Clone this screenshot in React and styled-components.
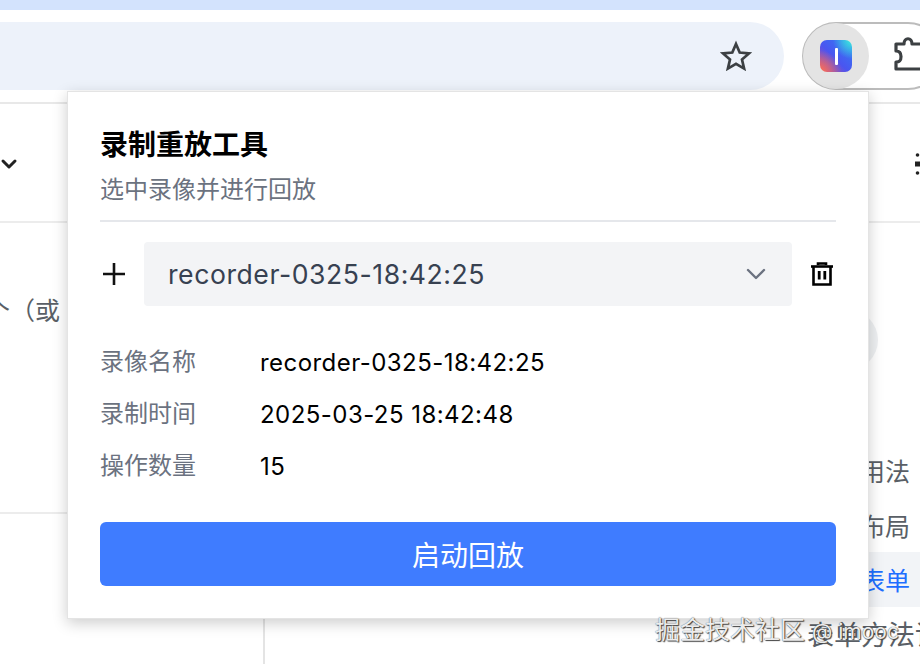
import React from "react";
import styled, { createGlobalStyle } from "styled-components";
import { ChevronDown } from "lucide-react";

const Global = createGlobalStyle`
  html, body { margin: 0; padding: 0; background: #fff; }
  body { font-family: Inter, "Noto Sans CJK SC", sans-serif; overflow: hidden; }
  * { box-sizing: border-box; }
`;
const Frame = styled.div`
  position: relative; width: 920px; height: 664px; overflow: hidden; background: #fff;
  display: flex; flex-direction: column;
`;
const TabStrip = styled.div`height: 10px; background: #d3e3fd; flex: none;`;
const Toolbar = styled.div`
  height: 94px; flex: none; display: flex; align-items: flex-start; padding-top: 12px;
  border-bottom: 2px solid #e8e8e8; background: #fff;
`;
const AddressBar = styled.div`
  width: 784px; height: 68px; background: #edf2fa; border-radius: 0 34px 34px 0;
  display: flex; align-items: center; justify-content: flex-end; padding-right: 32px; color: #3c4043; flex: none;
`;
const ExtensionPill = styled.div`
  margin-left: 18px; width: 140px; height: 68px; flex: none; border: 2px solid #bcbcbc;
  border-radius: 34px; display: flex; align-items: center;
`;
const ActiveExtension = styled.div`
  width: 66px; height: 66px; margin-left: -1px; border-radius: 50%; background: #e4e4e4; display: flex; align-items: center; justify-content: center; flex: none;
`;
const Logo = styled.div`
  width: 32px; height: 32px; border-radius: 7px; display: flex; align-items: center; justify-content: center;
  background:
    radial-gradient(circle at 100% 0%, #3cf0dc 0%, rgba(60,240,220,0) 42%),
    radial-gradient(circle at 0% 100%, #ff7050 0%, rgba(255,112,80,0) 48%),
    linear-gradient(45deg, #c2509a 0%, #4a55f0 45%, #2f80f5 100%);
  &::after { content: ""; width: 3px; height: 17px; background: #fff; border-radius: 1px; }
`;
const PuzzleSlot = styled.div`margin-left: 24px; color: #3c4043; display: flex; flex: none;`;
const HeaderRow = styled.div`
  height: 119px; flex: none; border-bottom: 2px solid #ececec; display: flex; align-items: center;
  justify-content: space-between; color: #1f2329;
`;
const HeaderChevron = styled.span`display: flex; margin: 2px 0 0 -3px;`;
const HeaderGlyph = styled.span`display: flex; margin: 2px 0 0 0;`;
const Body = styled.div`flex: 1; display: grid; grid-template-columns: 265px 1fr 112px; grid-template-rows: 291px 1fr; min-height: 0;`;
const Intro = styled.div`
  grid-column: 1 / 3; grid-row: 1; border-bottom: 2px solid #ececec; font-size: 25px; line-height: 34px; color: #5a5f66; padding: 71px 0 0 0; white-space: nowrap; overflow: hidden;
`;
const IntroText = styled.span`display: block; margin-left: -15px;`;
const LeftLower = styled.div`border-right: 2px solid #e4e4e4; grid-row: 2; grid-column: 1;`;
const SideNav = styled.div`
  grid-column: 3; grid-row: 1 / 3; display: flex; flex-direction: column; padding-top: 220px; white-space: nowrap; min-width: 0;
`;
const NavItem = styled.div`
  height: 54.5px; display: flex; align-items: center; justify-content: flex-end; padding-right: 10px;
  font-size: 25px; color: ${p => (p.$active ? "#1e6fff" : "#5a5f66")};
  background: ${p => (p.$active ? "#f2f4f7" : "transparent")};
`;
const LastNavItem = styled.div`height: 54px; font-size: 27px; color: #5a5f66; display: flex; align-items: center; margin-left: -1px; white-space: nowrap;`;
const GhostCircle = styled.div`
  position: absolute; left: 818px; top: 310px; width: 60px; height: 60px; border-radius: 50%; background: #eef0f2;
`;
const Watermark = styled.div`
  position: absolute; left: 655px; top: 614px; font-size: 25px; line-height: 32px; color: rgba(255,255,255,.92);
  text-shadow: 0 0 1px #333, 1px 1px 1px #444; white-space: nowrap; z-index: 3;
`;
const WatermarkHandle = styled.span`font-size: 21px;`;
const Popup = styled.div`
  position: absolute; left: 67px; top: 91px; width: 802px; height: 528px; background: #fff; z-index: 2;
  border: 1px solid #e4e4e4; box-shadow: 0 4px 14px rgba(0,0,0,.2); padding: 33px 32px 32px;
  display: flex; flex-direction: column;
`;
const Title = styled.h1`margin: 0; font-size: 28px; line-height: 40px; font-weight: 700; color: #000;`;
const Subtitle = styled.p`margin: 9px 0 0; font-size: 24px; line-height: 32px; color: #6b7280;`;
const Divider = styled.div`height: 2px; background: #e5e7eb; margin-top: 14px; flex: none;`;
const SelectRow = styled.div`display: flex; align-items: center; margin-top: 20px; height: 64px; flex: none;`;
const PlusButton = styled.span`width: 44px; display: flex; color: #111; flex: none;`;
const SelectBox = styled.div`
  width: 648px; height: 64px; background: #f3f4f6; border-radius: 4px; display: flex; align-items: center;
  justify-content: space-between; padding: 0 20px 0 24px; font-size: 26.6px; letter-spacing: .55px; color: #374151; flex: none;
`;
const TrashButton = styled.span`margin-left: 16px; display: flex; color: #000; flex: none;`;
const Details = styled.dl`
  margin: 29px 0 0; display: grid; grid-template-columns: 160px 1fr; grid-auto-rows: 52px; align-items: center; flex: none;
`;
const DetailLabel = styled.dt`font-size: 24px; color: #6b7280; margin-bottom: 4px;`;
const DetailValue = styled.dd`margin: 2px 0 0; font-size: 24px; letter-spacing: .45px; color: #000;`;
const PlayButton = styled.button`
  margin-top: 31px; height: 64px; border: 0; border-radius: 6px; background: #3f7cff; color: #fff; font: inherit; font-size: 28px; flex: none;
`;

const StarIcon = () => (
  <svg width="32" height="32" viewBox="0 0 32 32" fill="none" stroke="currentColor" strokeWidth="2.7" strokeLinejoin="miter">
    <polygon points="16,4 19.700,12.500 29,13.400 22,19.500 24.100,28.600 16,23.800 7.900,28.600 10,19.500 3,13.400 12.300,12.500" />
  </svg>
);
const Plus = () => (
  <svg width="28" height="28" viewBox="0 0 28 28" fill="none" stroke="currentColor" strokeWidth="2.6"><path d="M14 3v22M3 14h22"/></svg>
);
const Trash = () => (
  <svg width="28" height="28" viewBox="0 0 28 28" fill="none" stroke="currentColor">
    <path d="M3 6.5h22" strokeWidth="2.6"/><path d="M10 5V3.5h8V5" strokeWidth="2.6"/>
    <path d="M5.5 6.5v18h17v-18" strokeWidth="2.6"/><path d="M11.2 11v8.5M16.8 11v8.5" strokeWidth="2.8"/>
  </svg>
);
const Puzzle = () => (
  <svg width="40" height="40" viewBox="0 0 40 40" fill="none" stroke="currentColor" strokeWidth="3.2" strokeLinejoin="round">
    <path d="M3 8H11c0-7 8-7 8 0H42V33H3V26c5 0 5-3 5-5.500S7 15 3 15Z"/>
  </svg>
);
const DivideMark = () => (
  <svg width="6" height="24" viewBox="0 0 6 24" fill="#222">
    <circle cx="3.500" cy="3" r="1.800"/><rect x="1" y="9.500" width="5" height="5"/><circle cx="3.500" cy="21" r="1.800"/>
  </svg>
);

export default function App() {
  return (
    <Frame>
      <Global />
      <TabStrip />
      <Toolbar>
        <AddressBar><StarIcon /></AddressBar>
        <ExtensionPill>
          <ActiveExtension><Logo /></ActiveExtension>
          <PuzzleSlot><Puzzle /></PuzzleSlot>
        </ExtensionPill>
      </Toolbar>
      <HeaderRow>
        <HeaderChevron><ChevronDown size={24} strokeWidth={3} color="#222" /></HeaderChevron>
        <HeaderGlyph><DivideMark /></HeaderGlyph>
      </HeaderRow>
      <Body>
        <Intro><IntroText>个（或</IntroText></Intro>
        <LeftLower />
        <SideNav>
          <NavItem>用法</NavItem>
          <NavItem>布局</NavItem>
          <NavItem $active>表单</NavItem>
          <LastNavItem>表单方法详解</LastNavItem>
        </SideNav>
      </Body>
      <GhostCircle />
      <Popup>
        <Title>录制重放工具</Title>
        <Subtitle>选中录像并进行回放</Subtitle>
        <Divider />
        <SelectRow>
          <PlusButton><Plus /></PlusButton>
          <SelectBox>
            recorder-0325-18:42:25
            <ChevronDown size={32} strokeWidth={1.8} color="#6b7280" />
          </SelectBox>
          <TrashButton><Trash /></TrashButton>
        </SelectRow>
        <Details>
          <DetailLabel>录像名称</DetailLabel><DetailValue>recorder-0325-18:42:25</DetailValue>
          <DetailLabel>录制时间</DetailLabel><DetailValue>2025-03-25 18:42:48</DetailValue>
          <DetailLabel>操作数量</DetailLabel><DetailValue>15</DetailValue>
        </Details>
        <PlayButton>启动回放</PlayButton>
      </Popup>
      <Watermark>掘金技术社区 <WatermarkHandle>@ imooc</WatermarkHandle></Watermark>
    </Frame>
  );
}
